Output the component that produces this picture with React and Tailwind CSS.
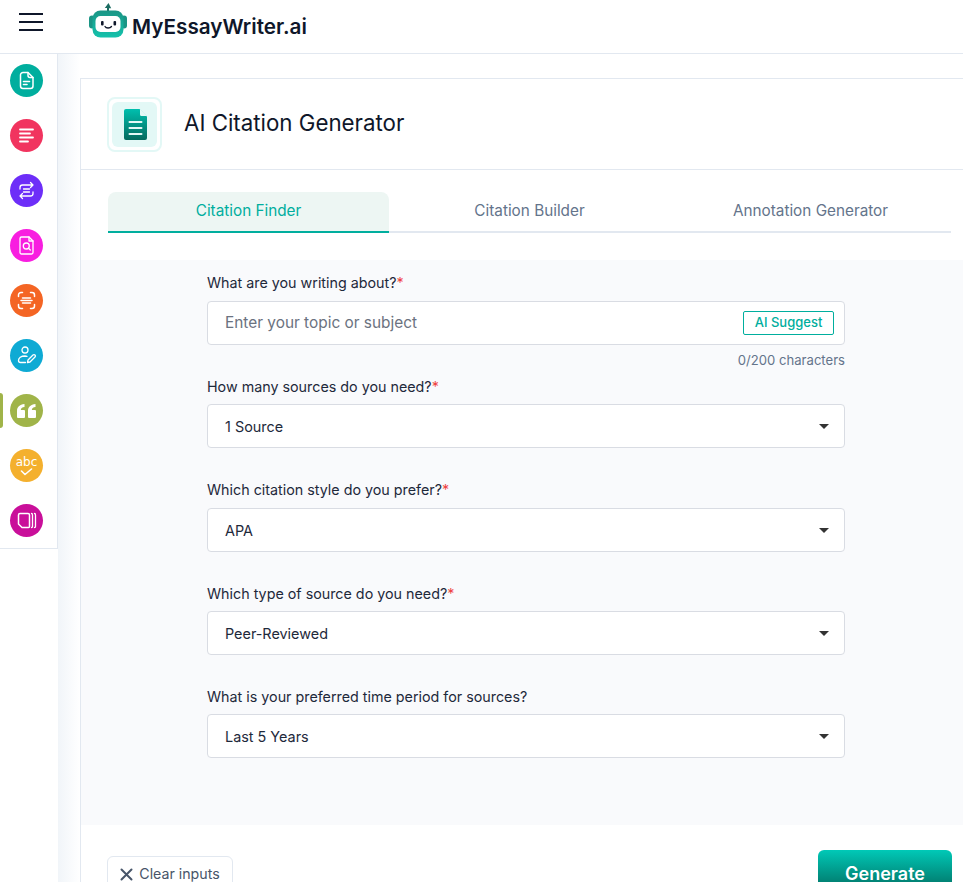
import React from "react"

const font = { fontFamily: "Inter, sans-serif" }

const Logo = () => (
  <svg width="38" height="35" viewBox="0 0 38 35" fill="none">
    <defs>
      <linearGradient id="logoGrad" x1="0" y1="0" x2="0" y2="1">
        <stop offset="0" stopColor="#1a9585" />
        <stop offset="1" stopColor="#14c2ac" />
      </linearGradient>
    </defs>
    <path d="M19.500 0l-3.700 5h2.200v3h2V5.200h2.200z" fill="#1c6d62" />
    <rect x="0" y="12.500" width="6" height="13" rx="3" fill="#1a9585" />
    <rect x="32" y="12.500" width="6" height="13" rx="3" fill="#1a9585" />
    <rect x="3.500" y="7.500" width="31" height="27" rx="8" fill="url(#logoGrad)" />
    <rect x="6.500" y="13" width="25" height="16" rx="5" fill="#fff" />
    <rect x="12" y="18" width="2.600" height="4.500" rx="1" fill="#0f172a" />
    <rect x="24.500" y="18" width="2.600" height="4.500" rx="1" fill="#0f172a" />
    <path d="M16 23.500c1 2 5 2 6.500 0" stroke="#0f172a" strokeWidth="1.300" strokeLinecap="round" />
  </svg>
)

const I = ({ children }) => (
  <svg width="21" height="21" viewBox="0 0 21 21" fill="none" stroke="#fff" strokeWidth="1.300" strokeLinecap="round" strokeLinejoin="round">
    {children}
  </svg>
)

const sideItems = [
  {
    bg: "bg-[#00ae9e]",
    icon: (
      <I>
        <path d="M4.500 5a2.500 2.500 0 0 1 2.500-2.500h5l5 5v8.500a2.500 2.500 0 0 1-2.500 2.500H7A2.500 2.500 0 0 1 4.500 16z" strokeWidth="1.500" />
        <path d="M12 2.500v3a2 2 0 0 0 2 2h3" strokeWidth="1.500" />
        <path d="M7.500 11.500h6M7.500 14.500h3.500" strokeWidth="1.600" />
      </I>
    ),
  },
  {
    bg: "bg-[#f1345f]",
    icon: (
      <I>
        <path d="M4 4.500h13M4 8.500h10M4 12.500h13M4 16.500h8" strokeWidth="1.800" />
      </I>
    ),
  },
  {
    bg: "bg-[#6d2ef8]",
    icon: (
      <I>
        <path d="M4 9V7.500A2.500 2.500 0 0 1 6.500 5H17M14.500 2.500 17 5l-2.500 2.500" />
        <path d="M17 12v1.500a2.500 2.500 0 0 1-2.500 2.500H4M6.500 13.500 4 16l2.500 2.500" />
        <path d="M7.500 9h6M7.500 12h6" />
      </I>
    ),
  },
  {
    bg: "bg-[#f81ee0]",
    icon: (
      <I>
        <path d="M4 3.500A1.500 1.500 0 0 1 5.500 2H13l4 4v11.500a1.500 1.500 0 0 1-1.500 1.500h-10A1.500 1.500 0 0 1 4 17.500z" />
        <path d="M13 2v4h4" />
        <circle cx="10.300" cy="11" r="3" />
        <path d="m12.500 13.200 1.800 1.800" />
      </I>
    ),
  },
  {
    bg: "bg-[#f46524]",
    icon: (
      <I>
        <path d="M2.500 6.500V5A2.500 2.500 0 0 1 5 2.500h1.500M14.500 2.500H16A2.500 2.500 0 0 1 18.500 5v1.500M18.500 14.500V16a2.500 2.500 0 0 1-2.500 2.500h-1.500M6.500 18.500H5A2.500 2.500 0 0 1 2.500 16v-1.500" strokeWidth="1.500" />
        <path d="M6.500 8h8M5 10.500h11M6.500 13h8" strokeWidth="1.500" />
      </I>
    ),
  },
  {
    bg: "bg-[#0eaad4]",
    icon: (
      <I>
        <circle cx="9" cy="5" r="3" />
        <path d="M11 11.300a12 12 0 0 0-2-.300c-4 0-6.500 2-6.500 4.500 0 1.200 1 2 2 2h5" />
        <path d="m11.500 17.500.5-2.500 5-5a1.400 1.400 0 0 1 2 2l-5 5z" />
      </I>
    ),
  },
  {
    bg: "bg-[#a0b449]",
    active: true,
    icon: (
      <svg width="19" height="14" viewBox="0 0 19 14" fill="#fff">
        <path d="M0 13a1 1 0 0 0 1 1h6a1 1 0 0 0 1-1V7a1 1 0 0 0-1-1H3.800C4 4.300 5 3.300 7.500 3V0C2.500.5 0 3 0 7zM11 13a1 1 0 0 0 1 1h6a1 1 0 0 0 1-1V7a1 1 0 0 0-1-1h-3.200c.2-1.700 1.200-2.700 3.700-3V0c-5 .5-7.500 3-7.500 7z" />
      </svg>
    ),
  },
  {
    bg: "bg-[#f4b02e]",
    icon: (
      <div className="flex flex-col items-center">
        <span className="text-[12px] leading-[12px] text-white" style={{ fontFamily: "'DejaVu Sans', sans-serif" }}>abc</span>
        <svg width="13" height="8" viewBox="0 0 13 8" fill="none" stroke="#fff" strokeWidth="1.600" strokeLinecap="round" strokeLinejoin="round">
          <path d="M1.500 3 5 6.500 11.500 1" />
        </svg>
      </div>
    ),
  },
  {
    bg: "bg-[#c90f9a]",
    icon: (
      <I>
        <path d="M2.500 5A1.500 1.500 0 0 1 4 3.500h8A1.500 1.500 0 0 1 13.500 5v11.500a1 1 0 0 1-1 1H6L2.500 14z" strokeWidth="1.500" />
        <path d="M15.500 3.500c.8 0 1 .5 1 1.500v11.500c0 1-.2 1-1 1M18.500 3.500c.8 0 1 .5 1 1.500v11.500c0 1-.2 1-1 1" />
      </I>
    ),
  },
]

const Label = ({ text, required }) => (
  <p className="text-[14.3px] leading-[20px] text-[#1e293b]">
    {text}
    {required && <span className="text-[#ef4444]">*</span>}
  </p>
)

const Select = ({ value }) => (
  <div className="flex h-[44px] items-center justify-between rounded-[4px] border border-[#d9dce3] bg-white pl-[17px] pr-[15px] text-[14.4px] text-[#1e293b]">
    <span className="pt-[2px]">{value}</span>
    <span className="h-0 w-0 border-x-[5px] border-t-[5px] border-x-transparent border-t-[#333]" />
  </div>
)

const App = () => {
  return (
    <div className="h-[882px] w-[963px] overflow-hidden bg-white" style={font}>
      <header className="flex h-[54px] items-center border-b border-[#e2e8f0] bg-white">
        <div className="mb-[10px] flex w-[62px] flex-col items-center gap-[6px]">
          <span className="h-[2px] w-[24px] bg-[#0f172a]" />
          <span className="h-[2px] w-[24px] bg-[#0f172a]" />
          <span className="h-[2px] w-[24px] bg-[#0f172a]" />
        </div>
        <div className="ml-[27px] flex items-center gap-[5px]">
          <div className="mb-[12px]">
            <Logo />
          </div>
          <span className="text-[20.7px] font-semibold leading-[28px] text-[#0f172a]">MyEssayWriter.ai</span>
        </div>
      </header>

      <div className="flex h-[828px]">
        <aside className="w-[58px] shrink-0 self-start border-b border-r border-[#e2e8f0] bg-white pb-[11px] pt-[10px]">
          <div className="flex flex-col gap-[22px]">
            {sideItems.map((item, i) => (
              <div key={i} className="relative flex pl-[10px]">
                {item.active && <span className="absolute left-0 top-[-1px] h-[35px] w-[3px] rounded-r-[3px] bg-[#a0b449]" />}
                <div className={`flex h-[33px] w-[33px] items-center justify-center rounded-full ${item.bg}`}>{item.icon}</div>
              </div>
            ))}
          </div>
        </aside>

        <main className="flex-1 bg-gradient-to-r from-[#f1f5f9] to-white to-[22px] pl-[22px] pt-[24px]">
          <div className="h-[900px] border-l border-t border-[#e2e8f0] bg-white">
            <div className="flex h-[91px] items-center gap-[22px] border-b border-[#e2e8f0] pl-[26px]">
              <div className="flex h-[55px] w-[55px] items-center justify-center rounded-[8px] border-2 border-[#e3f8f6] bg-white">
                <div className="flex h-[45px] w-[45px] items-center justify-center rounded-[6px] bg-[#e3f8f6] pl-[2px]">
                  <svg width="23" height="31" viewBox="0 0 23 31">
                    <defs>
                      <linearGradient id="docGrad" x1="0" y1="0" x2="0" y2="1">
                        <stop offset="0" stopColor="#00bfae" />
                        <stop offset="1" stopColor="#046a5e" />
                      </linearGradient>
                    </defs>
                    <path d="M2 0h13.500L23 7.500V29a2 2 0 0 1-2 2H2a2 2 0 0 1-2-2V2a2 2 0 0 1 2-2z" fill="url(#docGrad)" />
                    <path d="M16 0l7 7h-5.500a1.500 1.500 0 0 1-1.500-1.500z" fill="#e3f8f6" />
                    <path d="M5.500 13h12M5.500 19h12M5.500 25h12" stroke="#e3f8f6" strokeWidth="2" strokeLinecap="round" />
                  </svg>
                </div>
              </div>
              <h1 className="mb-[3px] text-[22.3px] font-normal leading-[30px] text-[#0f172a]">AI Citation Generator</h1>
            </div>

            <div className="ml-[27px] mt-[22px] flex w-[843px] border-b-2 border-[#e2e8f0] text-[15.3px]">
              <div className="-mb-[2px] flex h-[41px] w-[281px] items-center justify-center rounded-t-[8px] border-b-2 border-[#00ae9e] bg-[#edf6f3] text-[#00ae9e]">Citation Finder</div>
              <div className="flex h-[39px] w-[281px] items-center justify-center text-[#64748b]">Citation Builder</div>
              <div className="flex h-[39px] w-[281px] items-center justify-center text-[#64748b]">Annotation Generator</div>
            </div>

            <div className="mt-[27px] h-[565px] bg-[#f9fafc] pl-[126px] pt-[13px]">
              <div className="w-[638px]">
                <Label text="What are you writing about?" required />
                <div className="mt-[8px] flex h-[44px] items-center justify-between rounded-[4px] border border-[#d9dce3] bg-white pl-[17px] pr-[10px]">
                  <span className="text-[15.4px] text-[#6b7280]">Enter your topic or subject</span>
                  <span className="flex h-[24px] w-[91px] items-center justify-center rounded-[2px] border border-[#00ae9e] text-[13px] font-medium text-[#00ae9e]">AI Suggest</span>
                </div>
                <p className="mt-[7px] text-right text-[13.1px] leading-[16px] text-[#64748b]">0/200 characters</p>

                <div className="mt-[9px]">
                  <Label text="How many sources do you need?" required />
                </div>
                <div className="mt-[7px]"><Select value="1 Source" /></div>

                <div className="mt-[32px]">
                  <Label text="Which citation style do you prefer?" required />
                </div>
                <div className="mt-[8px]"><Select value="APA" /></div>

                <div className="mt-[32px]">
                  <Label text="Which type of source do you need?" required />
                </div>
                <div className="mt-[7px]"><Select value="Peer-Reviewed" /></div>

                <div className="mt-[32px]">
                  <Label text="What is your preferred time period for sources?" />
                </div>
                <div className="mt-[7px]"><Select value="Last 5 Years" /></div>
              </div>
            </div>

            <div className="flex items-start justify-between pl-[26px] pr-[11px] pt-[25px]">
              <div className="mt-[6px] flex h-[36px] w-[126px] items-center justify-center gap-[6px] rounded-[6px] border border-[#e2e8f0] bg-white text-[14.2px] text-[#475569]">
                <svg width="13" height="13" viewBox="0 0 13 13" stroke="#475569" strokeWidth="2" strokeLinecap="round">
                  <path d="M1.500 1.500l10 10M11.500 1.500l-10 10" />
                </svg>
                Clear inputs
              </div>
              <div className="flex h-[46px] w-[134px] items-center justify-center rounded-[6px] bg-gradient-to-b from-[#00c9b7] to-[#01665a] text-[18px] font-semibold text-white">Generate</div>
            </div>
          </div>
        </main>
      </div>
    </div>
  )
}

export default App
